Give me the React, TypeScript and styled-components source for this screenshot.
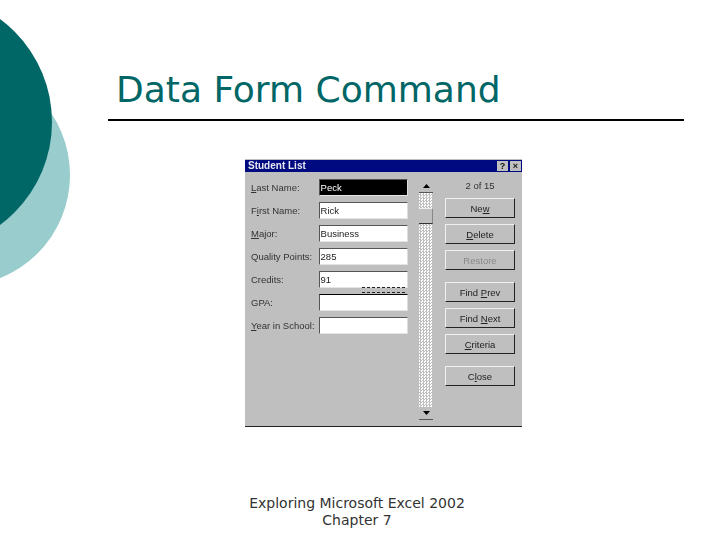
import * as React from "react";
import styled, { createGlobalStyle } from "styled-components";

const GlobalStyle = createGlobalStyle`
  html, body {
    margin: 0;
    padding: 0;
    background: #fff;
  }
`;

const fields = [
  { label: "Last Name:", key: "L", value: "Peck", active: true },
  { label: "First Name:", key: "i", value: "Rick" },
  { label: "Major:", key: "M", value: "Business" },
  { label: "Quality Points:", key: "", value: "285" },
  { label: "Credits:", key: "", value: "91" },
  { label: "GPA:", key: "", value: "", glitch: true },
  { label: "Year in School:", key: "Y", value: "" },
];

const buttons = [
  { label: "New", key: "w", gap: 0 },
  { label: "Delete", key: "D", gap: 6 },
  { label: "Restore", key: "", gap: 6, disabled: true },
  { label: "Find Prev", key: "P", gap: 12 },
  { label: "Find Next", key: "N", gap: 6 },
  { label: "Criteria", key: "C", gap: 6 },
  { label: "Close", key: "l", gap: 12 },
];

const withKey = (text: string, key: string) => {
  const i = key ? text.indexOf(key) : -1;
  if (i < 0) return <span>{text}</span>;
  return (
    <span>
      {text.slice(0, i)}
      <u>{key}</u>
      {text.slice(i + 1)}
    </span>
  );
};

export default function App() {
  return (
    <Slide>
      <GlobalStyle />
      <LightCircle />
      <DarkCircle />
      <Title>Data Form Command</Title>
      <Rule />
      <Dialog>
        <TitleBar>
          <span>Student List</span>
          <TitleButtons>
            <TitleButton>?</TitleButton>
            <TitleButton>×</TitleButton>
          </TitleButtons>
        </TitleBar>
        <Body>
          <Fields>
            {fields.map((f) => (
              <Row key={f.label}>
                <Label>{withKey(f.label, f.key)}</Label>
                <Field $active={f.active} $glitch={f.glitch}>
                  {f.value}
                  {f.glitch && <Glitch />}
                </Field>
              </Row>
            ))}
          </Fields>
          <ScrollBar>
            <Arrow>
              <svg width="7" height="4" viewBox="0 0 7 4">
                <path d="M3.5 0 L7 4 L0 4 Z" fill="#000" />
              </svg>
            </Arrow>
            <Thumb />
            <Track />
            <Arrow>
              <svg width="7" height="4" viewBox="0 0 7 4">
                <path d="M0 0 L7 0 L3.5 4 Z" fill="#000" />
              </svg>
            </Arrow>
          </ScrollBar>
          <Actions>
            <Counter>2 of 15</Counter>
            {buttons.map((b) => (
              <ActionButton key={b.label} $gap={b.gap} $disabled={b.disabled}>
                {withKey(b.label, b.key)}
              </ActionButton>
            ))}
          </Actions>
        </Body>
      </Dialog>
      <Footer>
        Exploring Microsoft Excel 2002
        <br />
        Chapter 7
      </Footer>
    </Slide>
  );
}

const Slide = styled.div`
  position: relative;
  width: 720px;
  height: 540px;
  overflow: hidden;
  background: #fff;
  font-family: "DejaVu Sans", Verdana, sans-serif;
  display: flex;
  flex-direction: column;
`;

const DarkCircle = styled.div`
  position: absolute;
  left: -204px;
  top: -6px;
  width: 256px;
  height: 256px;
  border-radius: 50%;
  background: #006666;
`;

const LightCircle = styled.div`
  position: absolute;
  left: -152px;
  top: 64px;
  width: 222px;
  height: 222px;
  border-radius: 50%;
  background: #99cccc;
`;

const Title = styled.h1`
  margin: 68px 0 0 116px;
  font-size: 36px;
  line-height: 44px;
  font-weight: 400;
  color: #006666;
`;

const Rule = styled.div`
  margin: 7px 36px 0 108px;
  height: 2px;
  background: #000;
`;

const Dialog = styled.div`
  width: 277px;
  height: 268px;
  margin: 38px 0 0 245px;
  box-sizing: border-box;
  padding: 1px 0 0 0;
  background: #c0bfc0;
  border-bottom: 1px solid #222;
  font-family: "Liberation Sans", Arial, sans-serif;
  font-size: 9.5px;
  color: #222;
  filter: blur(0.45px);
`;

const TitleBar = styled.div`
  height: 12px;
  background: #000a80;
  color: #e8e8f0;
  font-weight: 700;
  font-size: 10px;
  line-height: 12px;
  padding: 0 1px 0 3px;
  display: flex;
  align-items: center;
  justify-content: space-between;
`;

const TitleButtons = styled.div`
  display: flex;
  gap: 2px;
`;

const TitleButton = styled.div`
  width: 11px;
  height: 10px;
  background: #c0bfc0;
  color: #111;
  font-size: 9px;
  line-height: 10px;
  text-align: center;
`;

const Body = styled.div`
  display: flex;
  padding: 7px 7px 0 6px;
`;

const Fields = styled.div`
  width: 157px;
  display: flex;
  flex-direction: column;
  gap: 6px;
`;

const Row = styled.div`
  display: flex;
  align-items: center;
  height: 17px;
`;

const Label = styled.div`
  width: 68px;
  white-space: nowrap;
  color: #333;
`;

const Field = styled.div<{ $active?: boolean; $glitch?: boolean }>`
  position: relative;
  width: 90px;
  height: 17px;
  box-sizing: border-box;
  padding-left: 1px;
  line-height: 15px;
  background: ${(p) => (p.$active ? "#000" : "#fff")};
  color: ${(p) => (p.$active ? "#fff" : "#222")};
  border-top: 1px solid ${(p) => (p.$glitch ? "#000" : "#555")};
  border-left: 1px solid #555;
  border-right: 1px solid #ddd;
  border-bottom: 1px solid #e4e4e4;
`;

const Glitch = styled.span`
  position: absolute;
  left: 42px;
  right: 2px;
  top: -8px;
  height: 4px;
  border-top: 1px dashed #222;
  border-bottom: 1px dashed #222;
`;

const ScrollBar = styled.div`
  width: 14px;
  height: 240px;
  margin: 1px 0 0 11px;
  display: flex;
  flex-direction: column;
  background-color: #fff;
  background-image: conic-gradient(
    #c0bfc0 25%,
    #fff 0 50%,
    #c0bfc0 0 75%,
    #fff 0
  );
  background-size: 3px 3px;
`;

const Arrow = styled.div`
  height: 13px;
  flex-shrink: 0;
  background: #c0bfc0;
  border-bottom: 1px solid #555;
  box-sizing: border-box;
  display: flex;
  align-items: center;
  justify-content: center;
`;

const Thumb = styled.div`
  height: 14px;
  margin-top: 15px;
  background: #c0bfc0;
  border-top: 1px solid #eee;
  border-bottom: 1px solid #333;
  border-right: 1px solid #888;
`;

const Track = styled.div`
  flex: 1;
`;

const Actions = styled.div`
  width: 70px;
  margin-left: 12px;
  display: flex;
  flex-direction: column;
`;

const Counter = styled.div`
  height: 19px;
  line-height: 14px;
  text-align: center;
  color: #333;
`;

const ActionButton = styled.div<{ $gap: number; $disabled?: boolean }>`
  height: 20px;
  margin-top: ${(p) => p.$gap}px;
  box-sizing: border-box;
  display: flex;
  align-items: center;
  justify-content: center;
  background: #c0bfc0;
  color: ${(p) => (p.$disabled ? "#8a8a8a" : "#222")};
  border-top: 1px solid #f0f0f0;
  border-left: 1px solid #f0f0f0;
  border-right: 1px solid #222;
  border-bottom: 1px solid #222;
`;

const Footer = styled.div`
  margin-top: 68px;
  margin-left: 177px;
  width: 360px;
  text-align: center;
  font-size: 14px;
  line-height: 17px;
  color: #333;
`;
